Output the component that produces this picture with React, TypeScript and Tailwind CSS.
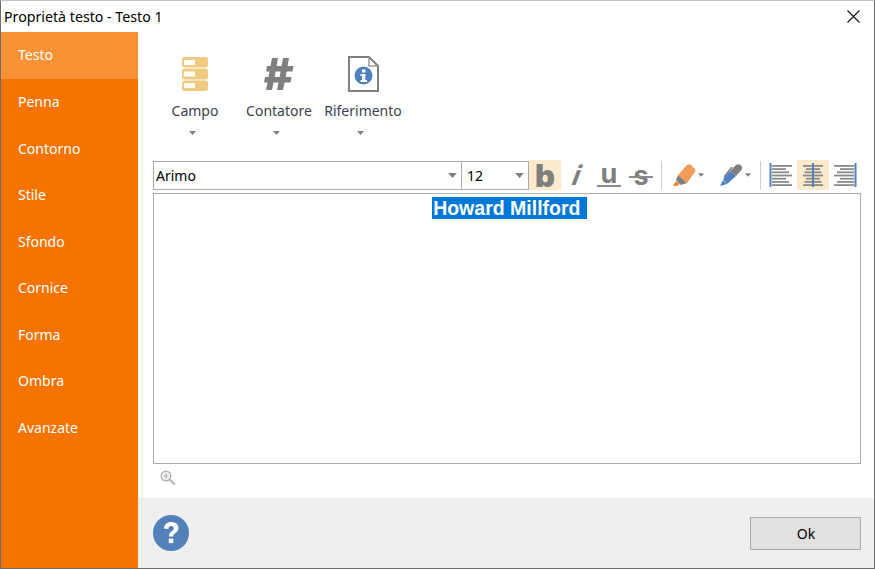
import React from 'react';

const FONT = "font-['Noto_Sans',sans-serif]";

const menuItems = ['Testo', 'Penna', 'Contorno', 'Stile', 'Sfondo', 'Cornice', 'Forma', 'Ombra', 'Avanzate'];

const Caret: React.FC<{ className?: string }> = ({ className = '' }) => (
  <svg width="7" height="4" viewBox="0 0 7 4" className={className}>
    <path d="M0 0H7L3.5 4Z" fill="#7f7f7f" />
  </svg>
);

const CampoIcon = () => (
  <svg width="28" height="36" viewBox="0 0 28 36">
    <rect x="1" y="1" width="26" height="10.5" rx="2.5" fill="#f0ca7f" />
    <rect x="1" y="12.5" width="26" height="11" rx="2.5" fill="#f0ca7f" />
    <rect x="1" y="24.5" width="26" height="10.5" rx="2.5" fill="#f0ca7f" />
    <rect x="3" y="4" width="11" height="5" fill="#fff" />
    <rect x="3" y="15.5" width="11" height="5" fill="#fff" />
    <rect x="3" y="27" width="11" height="5" fill="#fff" />
  </svg>
);

const HashIcon = () => (
  <svg width="30" height="32" viewBox="0 0 30 32">
    <path
      d="M8 0H14L12.6 8H17.6L19 0H25L23.6 8H29.5L28.5 13.5H22.6L21.6 19H27.5L26.5 24.5H20.6L19 32H13L14.5 24.5H9.5L8 32H2L3.5 24.5H0L1 19H4.5L5.5 13.5H2L3 8H6.6ZM11.6 13.5L10.6 19H15.6L16.6 13.5Z"
      fill="#7f7f7f"
      fillRule="evenodd"
    />
  </svg>
);

const RefIcon = () => (
  <svg width="31" height="36" viewBox="0 0 31 36">
    <path d="M1 1H21L30 10V35H1Z" fill="#fff" stroke="#7f7f7f" strokeWidth="2" />
    <path d="M21 1V10H30" fill="none" stroke="#9a9a9a" strokeWidth="1.5" />
    <circle cx="15.5" cy="19.5" r="9" fill="#4f81bd" />
    <rect x="14" y="13.5" width="3.4" height="3" fill="#fff" />
    <path d="M12.5 18H17.4V24H19V26H12.5V24H14V20H12.5Z" fill="#fff" />
  </svg>
);

const HighlighterIcon = () => (
  <svg width="24" height="24" viewBox="0 0 24 24">
    <path d="M1 23L4 18L8 21L5 23Z" fill="#e58a3a" />
    <path d="M4 17L6 12L15 20L9 22Z" fill="#7f7f7f" />
    <path d="M6 12L15 2Q17 0.5 19 2L23 6Q24 8 22.5 9.5L15 20Z" fill="#f19c58" />
  </svg>
);

const PenIcon = () => (
  <svg width="24" height="24" viewBox="0 0 24 24">
    <path d="M1 23L4 17L8 21Z" fill="#4f81bd" />
    <path d="M4 16L11 8L17 13L8 21Z" fill="#4f81bd" />
    <path d="M11 8L17 2Q19 0.5 21.5 2Q24 4.5 22.5 7L17 13Z" fill="#7f7f7f" />
    <path d="M5 14L13 4" stroke="#7f7f7f" strokeWidth="1.5" fill="none" />
  </svg>
);

const AlignIcon: React.FC<{ mode: 'left' | 'center' | 'right' }> = ({ mode }) => {
  const widths = [20, 14, 17, 20, 14, 17, 20];
  return (
    <svg width="24" height="26" viewBox="0 0 24 26">
      {widths.map((w, i) => {
        const x = mode === 'left' ? 3 : mode === 'right' ? 21 - w : 12 - w / 2;
        return <rect key={i} x={x} y={3 + i * 3.2} width={w} height="1.8" fill="#8a8a8a" />;
      })}
      <rect x={mode === 'left' ? 0.5 : mode === 'right' ? 21.5 : 11} y="1" width="2" height="24" fill="#4f81bd" />
    </svg>
  );
};

const ZoomIcon = () => (
  <svg width="16" height="16" viewBox="0 0 16 16">
    <circle cx="6" cy="6" r="4.8" fill="#f2f2f2" stroke="#b4b4b4" strokeWidth="1.4" />
    <path d="M3.5 6H8.5M6 3.5V8.5" stroke="#b0b0b0" strokeWidth="1.2" />
    <path d="M9.5 9.5L15 14.5" stroke="#b4b4b4" strokeWidth="2.2" />
  </svg>
);

const StyleButton: React.FC<{ active?: boolean; children: React.ReactNode }> = ({ active, children }) => (
  <div className={`relative flex h-[30px] w-8 items-center justify-center ${active ? 'bg-[#fdeacb]' : ''}`}>{children}</div>
);

const RibbonButton: React.FC<{ label: string; children: React.ReactNode }> = ({ label, children }) => (
  <div className="flex w-[84px] flex-col items-center">
    <div className="flex h-[36px] items-center justify-center">{children}</div>
    <div className="mt-[9px] text-[14px] leading-[20px] whitespace-nowrap text-[#3c4150]">{label}</div>
    <Caret className="mt-[10px] -ml-[6px]" />
  </div>
);

export default function App() {
  return (
    <div className={`flex h-[569px] w-[875px] flex-col overflow-hidden border-t border-r border-b border-l border-t-[#c4c4c4] border-r-[#6d6d6d] border-b-[#6d6d6d] border-l-[#6d6d6d] bg-white ${FONT}`}>
      <div className="flex h-[31px] shrink-0 items-center justify-between pl-[3px] pr-[14px]">
        <span className="text-[14.2px] text-black">Proprietà testo - Testo 1</span>
        <svg width="13" height="13" viewBox="0 0 13 13">
          <path d="M0.5 0.5L12.5 12.5M12.5 0.5L0.5 12.5" stroke="#111" strokeWidth="1.1" />
        </svg>
      </div>

      <div className="flex min-h-0 flex-1">
        <nav className="w-[137px] shrink-0 bg-[#f67300]">
          {menuItems.map((item, i) => (
            <div
              key={item}
              className={`flex h-[46.5px] items-center pl-[17px] text-[14px] text-white ${i === 0 ? 'bg-[#f99235] pb-[2px]' : ''}`}
            >
              {item}
            </div>
          ))}
        </nav>

        <div className="flex min-w-0 flex-1 flex-col">
          <div className="flex flex-1 flex-col pl-[15px] pr-[13px]">
            <div className="flex pt-[24px]">
              <RibbonButton label="Campo"><CampoIcon /></RibbonButton>
              <RibbonButton label="Contatore"><HashIcon /></RibbonButton>
              <RibbonButton label="Riferimento"><RefIcon /></RibbonButton>
            </div>

            <div className="mt-[25px] flex h-[30px] items-center">
              <div className="flex h-[29px] w-[309px] shrink-0 items-center justify-between border border-[#ababab] pl-[2px] pr-[4px] text-[14px] text-black">
                <span>Arimo</span>
                <Caret className="h-[5px] w-[9px]" />
              </div>
              <div className="-ml-px flex h-[29px] w-[68px] shrink-0 items-center justify-between border border-[#ababab] pl-[5px] pr-[4px] text-[14px] text-black">
                <span>12</span>
                <Caret className="h-[5px] w-[9px]" />
              </div>
              <div className="flex">
                <StyleButton active>
                  <span className="font-['Inter',sans-serif] text-[31px] leading-none font-black text-[#7f7f7f]">b</span>
                </StyleButton>
                <StyleButton>
                  <span className="inline-block -skew-x-12 font-['Inter',sans-serif] text-[27px] leading-none font-bold text-[#7f7f7f] italic">i</span>
                </StyleButton>
                <StyleButton>
                  <span className="font-['Inter',sans-serif] -mt-[4px] text-[27px] leading-none font-bold text-[#7f7f7f]">u</span>
                  <span className="absolute top-[25px] left-[4px] h-[2px] w-[24px] bg-[#8a8a8a]" />
                </StyleButton>
                <StyleButton>
                  <span className="font-['Inter',sans-serif] text-[27px] leading-none font-bold text-[#7f7f7f]">s</span>
                  <span className="absolute top-[16px] left-[4px] h-[2px] w-[24px] bg-[#8a8a8a]" />
                </StyleButton>
              </div>
              <div className="ml-[4px] h-[29px] w-px bg-[#cfcfcf]" />
              <div className="ml-[10px] flex items-center">
                <HighlighterIcon />
                <Caret className="ml-[2px] h-[4px] w-[6px]" />
              </div>
              <div className="ml-[15px] flex items-center">
                <PenIcon />
                <Caret className="ml-[2px] h-[4px] w-[6px]" />
              </div>
              <div className="ml-[9px] h-[29px] w-px bg-[#cfcfcf]" />
              <div className="ml-[5px] flex">
                <StyleButton><AlignIcon mode="left" /></StyleButton>
                <StyleButton active><AlignIcon mode="center" /></StyleButton>
                <StyleButton><AlignIcon mode="right" /></StyleButton>
              </div>
            </div>

            <div className="mt-[3px] h-[271px] border border-[#ababab] pt-[3px] text-center">
              <span className="ml-[5px] bg-[#0078d7] px-[1px] font-['Liberation_Sans',sans-serif] text-[19.5px] leading-[23px] font-bold whitespace-pre text-white">Howard Millford </span>
            </div>

            <div className="mt-[6px] pl-[7px]">
              <ZoomIcon />
            </div>
          </div>

          <div className="flex h-[70px] shrink-0 items-center justify-between bg-[#efefef] pl-[15px] pr-[13px]">
            <svg width="36" height="36" viewBox="0 0 36 36">
              <circle cx="18" cy="18" r="18" fill="#5280b8" />
              <path
                d="M11 13.5C11 9.5 14 7 18.3 7C22.5 7 25.5 9.3 25.5 13C25.5 15.8 23.9 17.1 22.1 18.3C20.6 19.3 20.2 20 20.2 21.5H15.9C15.9 19 16.6 17.6 18.4 16.4C20 15.3 20.8 14.7 20.8 13.4C20.8 12 19.8 11.1 18.2 11.1C16.5 11.1 15.5 12.1 15.4 13.9Z"
                fill="#fff"
              />
              <rect x="15.8" y="23.6" width="4.5" height="4.5" fill="#fff" />
            </svg>
            <div className="flex h-[33px] w-[111px] items-center justify-center border border-[#ababab] bg-[#e1e1e1] pt-px pl-px text-[14px] text-black">
              Ok
            </div>
          </div>
        </div>
      </div>
    </div>
  );
}
